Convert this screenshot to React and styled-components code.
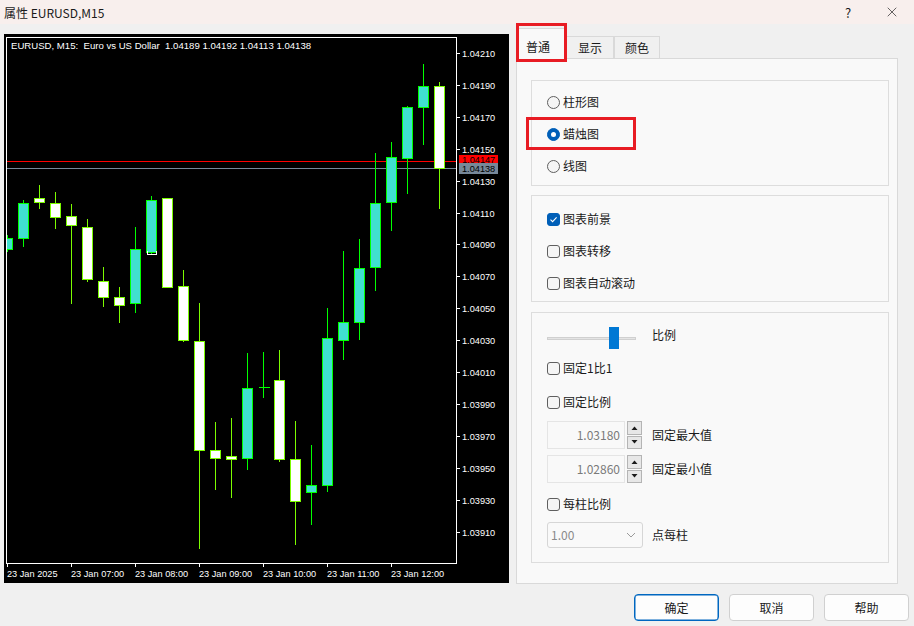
import React from 'react';
import styled, { createGlobalStyle } from 'styled-components';
import { X } from 'lucide-react';

const GlobalStyle = createGlobalStyle`
  html, body {
    margin: 0;
    padding: 0;
    background: #f0f0f0;
  }
  body {
    font-family: "Noto Sans CJK SC", "Noto Sans", sans-serif;
    color: #1a1a1a;
  }
`;

const Window = styled.div`
  position: relative;
  width: 914px;
  height: 626px;
  display: flex;
  flex-direction: column;
  background: #f0f0f0;
  overflow: hidden;
`;

const TitleBar = styled.div`
  height: 24px;
  flex-shrink: 0;
  display: flex;
  align-items: center;
  padding-left: 4px;
  background: #f8efed;
  font-size: 12px;
`;

const TitleText = styled.div`
  flex: 1;
`;

const TitleButton = styled.div`
  width: 44px;
  height: 24px;
  display: flex;
  align-items: center;
  justify-content: center;
  font-size: 13px;
`;

const Main = styled.div`
  display: flex;
  align-items: flex-start;
  padding-left: 4px;
`;

const ChartBox = styled.div`
  width: 505px;
  height: 549px;
  margin-top: 10px;
  background: #000;
  svg {
    display: block;
  }
`;

const RightPane = styled.div`
  width: 382px;
  margin-left: 7px;
  display: flex;
  flex-direction: column;
`;

const TabRow = styled.div`
  height: 34px;
  display: flex;
  align-items: flex-end;
`;

const Tab = styled.div`
  box-sizing: border-box;
  width: ${(p) => p.$w}px;
  height: ${(p) => (p.$active ? 31 : 22)}px;
  display: flex;
  justify-content: center;
  align-items: ${(p) => (p.$active ? 'flex-start' : 'center')};
  padding-top: ${(p) => (p.$active ? 10 : 0)}px;
  padding-right: ${(p) => (p.$active ? 6 : 0)}px;
  border: 1px solid #d9d9d9;
  border-bottom: none;
  background: ${(p) => (p.$active ? '#f9f9f9' : '#f0f0f0')};
  margin-bottom: ${(p) => (p.$active ? -1 : 0)}px;
  position: relative;
  z-index: ${(p) => (p.$active ? 2 : 1)};
  font-size: 12px;
  line-height: 16px;
`;

const Panel = styled.div`
  box-sizing: border-box;
  height: 526px;
  border: 1px solid #d9d9d9;
  background: #f9f9f9;
  padding: 21px 8px 0 14px;
  display: flex;
  flex-direction: column;
`;

const Group = styled.div`
  box-sizing: border-box;
  height: ${(p) => p.$h}px;
  margin-top: ${(p) => p.$mt || 0}px;
  padding: ${(p) => p.$pt || 0}px 0 0 15px;
  border: 1px solid #dddddd;
  background: #f9f9f9;
  display: flex;
  flex-direction: column;
`;

const OptionRow = styled.div`
  height: ${(p) => p.$h}px;
  margin-top: ${(p) => p.$mt || 0}px;
  display: flex;
  align-items: center;
  gap: ${(p) => p.$gap ?? 3}px;
  font-size: 12px;
  line-height: 16px;
`;

const Radio = styled.span`
  box-sizing: border-box;
  width: 13px;
  height: 13px;
  border-radius: 50%;
  border: 1px solid ${(p) => (p.$on ? '#005fb8' : '#5f5f5f')};
  background: ${(p) => (p.$on ? '#005fb8' : '#f5f5f5')};
  display: flex;
  align-items: center;
  justify-content: center;
  &::after {
    content: '';
    display: ${(p) => (p.$on ? 'block' : 'none')};
    width: 5px;
    height: 5px;
    border-radius: 50%;
    background: #fff;
  }
`;

const Check = styled.span`
  box-sizing: border-box;
  width: 13px;
  height: 13px;
  border-radius: 3px;
  border: 1px solid ${(p) => (p.$on ? '#005fb8' : '#5f5f5f')};
  background: ${(p) => (p.$on ? '#005fb8' : '#f5f5f5')};
  display: flex;
  align-items: center;
  justify-content: center;
`;

const SliderRow = styled.div`
  height: 22px;
  margin-top: 14px;
  display: flex;
  align-items: flex-start;
  font-size: 12px;
  line-height: 16px;
`;

const Slider = styled.div`
  position: relative;
  width: 89px;
  height: 22px;
  margin-right: 16px;
`;

const Track = styled.div`
  position: absolute;
  left: 0;
  right: 0;
  top: 10px;
  height: 3px;
  background: #e4e4e4;
  border: 1px solid #d0d0d0;
  box-sizing: border-box;
`;

const Thumb = styled.div`
  position: absolute;
  left: 62px;
  top: 0;
  width: 10px;
  height: 22px;
  background: #0078d4;
`;

const SpinInput = styled.div`
  box-sizing: border-box;
  width: 78px;
  height: 28px;
  border: 1px solid #e5e5e5;
  background: #f9f9f9;
  display: flex;
  align-items: center;
  justify-content: flex-end;
  padding-right: 4px;
  color: #7a7a7a;
  font-size: 12px;
`;

const SpinButtons = styled.div`
  width: 15px;
  height: 28px;
  display: flex;
  flex-direction: column;
  gap: 1px;
  margin-left: 2px;
  margin-right: 10px;
`;

const SpinButton = styled.div`
  box-sizing: border-box;
  flex: 1;
  border: 1px solid #b4b4b4;
  background: #e7e7e7;
  display: flex;
  align-items: center;
  justify-content: center;
`;

const Dropdown = styled.div`
  box-sizing: border-box;
  width: 96px;
  height: 26px;
  margin-right: 9px;
  border: 1px solid #d6d6d6;
  border-radius: 3px;
  background: #f9f9f9;
  display: flex;
  align-items: center;
  justify-content: space-between;
  padding: 0 6px 0 3px;
  color: #8a8a8a;
  font-size: 12px;
`;

const Footer = styled.div`
  margin-top: 10px;
  height: 27px;
  display: flex;
  justify-content: flex-end;
  gap: 10px;
  padding-right: 5px;
`;

const Button = styled.div`
  box-sizing: border-box;
  width: 85px;
  height: 27px;
  border-radius: 4px;
  border: 1px solid ${(p) => (p.$primary ? '#0067c0' : '#d0d0d0')};
  box-shadow: ${(p) => (p.$primary ? 'inset 0 0 0 0.5px #0067c0' : 'none')};
  background: #fdfdfd;
  display: flex;
  align-items: center;
  justify-content: center;
  font-size: 12px;
`;

const Highlight = styled.div`
  position: absolute;
  box-sizing: border-box;
  left: ${(p) => p.$x}px;
  top: ${(p) => p.$y}px;
  width: ${(p) => p.$w}px;
  height: ${(p) => p.$h}px;
  border: 3px solid #e81c24;
  pointer-events: none;
  z-index: 5;
`;

// [type, bodyTop, bodyBottom, wickTop, wickBottom]  u = bull, d = bear, z = doji
const candles = [
  ['u', 238, 249, 235, 252],
  ['u', 203, 238, 200, 247],
  ['d', 198, 202, 185, 209],
  ['d', 203, 217, 192, 229],
  ['d', 216, 225, 204, 304],
  ['d', 227, 279, 219, 282],
  ['d', 281, 297, 267, 307],
  ['d', 297, 305, 287, 323],
  ['u', 249, 303, 227, 313],
  ['u', 200, 252, 196, 255],
  ['d', 198, 287, 198, 288],
  ['d', 286, 340, 270, 342],
  ['d', 341, 450, 303, 549],
  ['d', 450, 458, 422, 490],
  ['d', 456, 459, 418, 498],
  ['u', 388, 458, 353, 470],
  ['z', 387, 387, 352, 398],
  ['d', 380, 459, 350, 462],
  ['d', 459, 501, 421, 545],
  ['u', 485, 492, 445, 525],
  ['u', 338, 485, 308, 492],
  ['u', 322, 340, 251, 360],
  ['u', 268, 322, 239, 340],
  ['u', 203, 267, 153, 291],
  ['u', 157, 202, 142, 231],
  ['u', 107, 158, 106, 194],
  ['u', 86, 107, 64, 145],
  ['d', 86, 168, 82, 209],
];

const prices = Array.from({ length: 16 }, (_, k) => ({
  label: (1.0421 - k * 0.0002).toFixed(5),
  y: Math.round(53 + k * 31.9),
}));

const times = ['23 Jan 2025', '23 Jan 07:00', '23 Jan 08:00', '23 Jan 09:00', '23 Jan 10:00', '23 Jan 11:00', '23 Jan 12:00'];

const axisFont = { fontFamily: '"Liberation Sans", Arial, sans-serif', fontSize: 9.2 };

const Chart = () => (
  <svg width="505" height="549" viewBox="4 34 505 549" shapeRendering="crispEdges">
    <defs>
      <clipPath id="plot">
        <rect x="7" y="38" width="449" height="525" />
      </clipPath>
    </defs>
    <rect x="4" y="34" width="505" height="549" fill="#000" />
    <g clipPath="url(#plot)">
      <line x1="7" x2="456" y1="161.5" y2="161.5" stroke="#ff0000" />
      <line x1="7" x2="456" y1="168.5" y2="168.5" stroke="#778899" />
      {candles.map(([t, bt, bb, wt, wb], i) => {
        const cx = 7.5 + 16 * i;
        const line = t === 'u' || t === 'z' ? '#00ff00' : '#7cfc00';
        const fill = t === 'u' ? '#40e0d0' : '#ffffff';
        return (
          <g key={i}>
            <line x1={cx} x2={cx} y1={wt} y2={wb} stroke={line} />
            {t === 'z' ? (
              <line x1={cx - 5} x2={cx + 6} y1={bt + 0.5} y2={bt + 0.5} stroke={line} />
            ) : (
              <rect x={cx - 5} y={bt + 0.5} width="10" height={bb - bt} fill={fill} stroke={line} />
            )}
          </g>
        );
      })}
      <path d="M147.5 251 V254.5 H156.5 V251" fill="none" stroke="#fff" />
    </g>
    <rect x="6.5" y="37.5" width="450" height="525.5" fill="none" stroke="#fff" />
    {prices.map((p) => (
      <g key={p.label}>
        <line x1="456" x2="460" y1={p.y + 0.5} y2={p.y + 0.5} stroke="#fff" />
        <text x="462" y={p.y + 3.5} fill="#fff" style={axisFont}>
          {p.label}
        </text>
      </g>
    ))}
    <rect x="459" y="155" width="39" height="9" fill="#ff0000" />
    <text x="462" y="162.5" fill="#000" style={axisFont}>1.04147</text>
    <rect x="459" y="163" width="39" height="11" fill="#778899" />
    <text x="462" y="172" fill="#000" style={axisFont}>1.04138</text>
    {times.map((t, j) => {
      const x = 7.5 + 64 * j;
      return (
        <g key={t}>
          <line x1={x} x2={x} y1="563" y2="567" stroke="#fff" />
          <text x={x - 0.5} y="576.5" fill="#fff" style={axisFont}>
            {t}
          </text>
        </g>
      );
    })}
    <text x="11" y="48.5" fill="#fff" style={{ ...axisFont, fontSize: 9.6, whiteSpace: 'pre' }}>
      {'EURUSD, M15:  Euro vs US Dollar  1.04189 1.04192 1.04113 1.04138'}
    </text>
  </svg>
);

const CheckMark = () => (
  <svg width="9" height="9" viewBox="0 0 9 9">
    <path d="M1.5 4.6 L3.6 6.6 L7.6 2.4" fill="none" stroke="#fff" strokeWidth="1.1" />
  </svg>
);

const Arrow = ({ up }) => (
  <svg width="7" height="4" viewBox="0 0 7 4">
    <path d={up ? 'M0.5 4 L3.5 0.5 L6.5 4 Z' : 'M0.5 0 L3.5 3.5 L6.5 0 Z'} fill="#1a1a1a" />
  </svg>
);

const Chevron = () => (
  <svg width="10" height="6" viewBox="0 0 10 6">
    <path d="M1 1 L5 5 L9 1" fill="none" stroke="#9a9a9a" strokeWidth="1" />
  </svg>
);

const SpinBox = ({ value, label, mt }) => (
  <OptionRow $h={28} $mt={mt} $gap={0}>
    <SpinInput>{value}</SpinInput>
    <SpinButtons>
      <SpinButton>
        <Arrow up />
      </SpinButton>
      <SpinButton>
        <Arrow />
      </SpinButton>
    </SpinButtons>
    <span>{label}</span>
  </OptionRow>
);

const CheckOption = ({ on, label, mt, h = 32 }) => (
  <OptionRow $h={h} $mt={mt}>
    <Check $on={on}>{on && <CheckMark />}</Check>
    <span>{label}</span>
  </OptionRow>
);

export default function App() {
  return (
    <>
      <GlobalStyle />
      <Window>
        <TitleBar>
          <TitleText>属性 EURUSD,M15</TitleText>
          <TitleButton>?</TitleButton>
          <TitleButton>
            <X size={16} strokeWidth={1} />
          </TitleButton>
        </TitleBar>
        <Main>
          <ChartBox>
            <Chart />
          </ChartBox>
          <RightPane>
            <TabRow>
              <Tab $w={50} $active>普通</Tab>
              <Tab $w={48}>显示</Tab>
              <Tab $w={46}>颜色</Tab>
            </TabRow>
            <Panel>
              <Group $h={106} $pt={5}>
                <OptionRow $h={32}>
                  <Radio />
                  <span>柱形图</span>
                </OptionRow>
                <OptionRow $h={32}>
                  <Radio $on />
                  <span>蜡烛图</span>
                </OptionRow>
                <OptionRow $h={32}>
                  <Radio />
                  <span>线图</span>
                </OptionRow>
              </Group>
              <Group $h={107} $pt={7} $mt={9}>
                <CheckOption on label="图表前景" />
                <CheckOption label="图表转移" />
                <CheckOption label="图表自动滚动" />
              </Group>
              <Group $h={251} $mt={10}>
                <SliderRow>
                  <Slider>
                    <Track />
                    <Thumb />
                  </Slider>
                  <span>比例</span>
                </SliderRow>
                <CheckOption h={16} mt={11} label="固定1比1" />
                <CheckOption h={16} mt={18} label="固定比例" />
                <SpinBox mt={11} value="1.03180" label="固定最大值" />
                <SpinBox mt={6} value="1.02860" label="固定最小值" />
                <CheckOption h={16} mt={13} label="每柱比例" />
                <OptionRow $h={26} $mt={10} $gap={0}>
                  <Dropdown>
                    <span>1.00</span>
                    <Chevron />
                  </Dropdown>
                  <span>点每柱</span>
                </OptionRow>
              </Group>
            </Panel>
          </RightPane>
        </Main>
        <Footer>
          <Button $primary>确定</Button>
          <Button>取消</Button>
          <Button>帮助</Button>
        </Footer>
        <Highlight $x={516} $y={23} $w={51} $h={39} />
        <Highlight $x={526} $y={117} $w={110} $h={33} />
      </Window>
    </>
  );
}
